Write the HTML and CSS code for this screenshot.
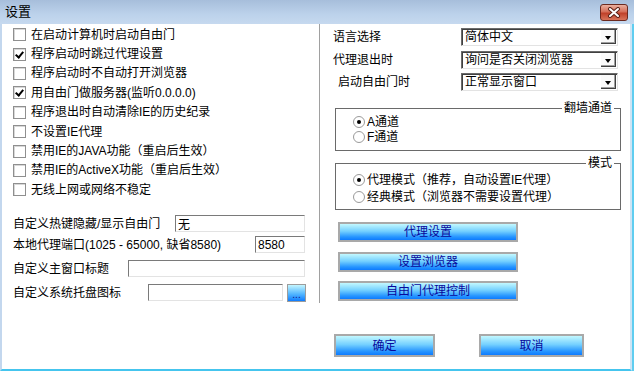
FILE: index.html
```html
<!DOCTYPE html>
<html lang="zh-CN">
<head>
    <meta charset="UTF-8">
    <title>设置</title>
    <link rel="stylesheet" href="styles.css">
</head>
<body>
<div class="window">
    <div class="titlebar">
        <span class="title">设置</span>
        <button class="close">
            <svg width="14" height="11" viewBox="0 0 14 11">
                <path d="M3 2 L11 9 M11 2 L3 9" stroke="#5b2118" stroke-width="4" stroke-linecap="round"/>
                <path d="M3 2 L11 9 M11 2 L3 9" stroke="#fff" stroke-width="2" stroke-linecap="round"/>
            </svg>
        </button>
    </div>

    <div class="body">
        <div class="cols">
            <div class="left">
                <div class="checks">
                    <label class="check"><span class="box"></span>在启动计算机时启动自由门</label>
                    <label class="check"><span class="box on"></span>程序启动时跳过代理设置</label>
                    <label class="check"><span class="box"></span>程序启动时不自动打开浏览器</label>
                    <label class="check"><span class="box on"></span>用自由门做服务器(监听0.0.0.0)</label>
                    <label class="check"><span class="box"></span>程序退出时自动清除IE的历史纪录</label>
                    <label class="check"><span class="box"></span>不设置IE代理</label>
                    <label class="check"><span class="box"></span>禁用IE的JAVA功能（重启后生效）</label>
                    <label class="check"><span class="box"></span>禁用IE的ActiveX功能（重启后生效）</label>
                    <label class="check"><span class="box"></span>无线上网或网络不稳定</label>
                </div>

                <div class="field f1">
                    <span class="flabel w162">自定义热键隐藏/显示自由门</span>
                    <input class="text w130" type="text" value="无">
                </div>
                <div class="field f2">
                    <span class="flabel w242">本地代理端口(1025 - 65000, 缺省8580)</span>
                    <input class="text w50" type="text" value="8580">
                </div>
                <div class="field f3">
                    <span class="flabel w115">自定义主窗口标题</span>
                    <input class="text w177" type="text" value="">
                </div>
                <div class="field f3">
                    <span class="flabel w135">自定义系统托盘图标</span>
                    <input class="text w135" type="text" value="">
                    <button class="browse">...</button>
                </div>
            </div>

            <div class="right">
                <div class="opt">
                    <span class="olabel">语言选择</span>
                    <div class="combo"><span class="cval">简体中文</span><span class="arrow"></span></div>
                </div>
                <div class="opt">
                    <span class="olabel">代理退出时</span>
                    <div class="combo"><span class="cval">询问是否关闭浏览器</span><span class="arrow"></span></div>
                </div>
                <div class="opt">
                    <span class="olabel indent">启动自由门时</span>
                    <div class="combo"><span class="cval">正常显示窗口</span><span class="arrow"></span></div>
                </div>

                <div class="group g1">
                    <span class="gtitle">翻墙通道</span>
                    <label class="radio"><span class="dot on"></span>A通道</label>
                    <label class="radio"><span class="dot"></span>F通道</label>
                </div>
                <div class="group g2">
                    <span class="gtitle">模式</span>
                    <label class="radio"><span class="dot on"></span>代理模式（推荐，自动设置IE代理）</label>
                    <label class="radio"><span class="dot"></span>经典模式（浏览器不需要设置代理）</label>
                </div>

                <div class="btns">
                    <button class="blue wide">代理设置</button>
                    <button class="blue wide">设置浏览器</button>
                    <button class="blue wide">自由门代理控制</button>
                </div>
            </div>
        </div>

        <div class="actions">
            <button class="blue ok">确定</button>
            <button class="blue cancel">取消</button>
        </div>
    </div>
</div>
</body>
</html>
```

FILE: styles.css
```css
* {
    box-sizing: border-box;
}

body {
    margin: 0;
    font-family: "Liberation Sans", "Noto Sans CJK SC", sans-serif;
    font-size: 12px;
    color: #000;
}

.window {
    width: 634px;
    height: 371px;
    background: #fff;
    display: flex;
    flex-direction: column;
}

.titlebar {
    height: 24px;
    flex: none;
    display: flex;
    align-items: center;
    justify-content: space-between;
    padding: 0 6px 0 5px;
    background: linear-gradient(#a7bedb, #bcd2eb 60%, #c6d9ef);
}

.title {
    font-size: 13px;
    line-height: 24px;
}

.close {
    width: 28px;
    height: 17px;
    padding: 0;
    border: 1px solid #6b2a20;
    border-radius: 3px;
    background: linear-gradient(#eab0a0, #d56e58 45%, #c0412a 55%, #d8745a);
    display: flex;
    align-items: center;
    justify-content: center;
}

.body {
    flex: 1;
    width: 632px;
    border-left: 2px solid #c3d7ee;
    border-right: 2px solid #cfe4f4;
    border-bottom: 2px solid #45c5ee;
    box-shadow: 2px 0 0 #5fcdf0;
    display: flex;
    flex-direction: column;
}

.cols {
    display: flex;
    height: 279px;
}

/* left column */

.left {
    width: 318px;
    border-right: 1px solid #a0a0a0;
    padding: 1px 0 0 11px;
}

.check {
    display: flex;
    align-items: center;
    height: 19.4px;
    gap: 5px;
    line-height: 14px;
}

.box {
    width: 13px;
    height: 13px;
    flex: none;
    border: 1px solid #8f8f8f;
    box-shadow: inset 1px 1px 0 #d8d8d8;
    background: #fff;
    position: relative;
}

.box.on::after {
    content: "";
    position: absolute;
    left: 3px;
    top: 1px;
    width: 3px;
    height: 6px;
    border-right: 2px solid #000;
    border-bottom: 2px solid #000;
    transform: rotate(40deg);
}

.field {
    display: flex;
    align-items: center;
    height: 20px;
}

.f1 {
    margin-top: 14px;
}

.f2 {
    margin-top: 1px;
}

.f3 {
    margin-top: 4px;
}

.flabel {
    flex: none;
    white-space: nowrap;
    line-height: 14px;
}

.w162 { width: 162px; }
.w242 { width: 242px; }
.w115 { width: 115px; }
.w135 { width: 135px; }
.w130 { width: 130px; }
.w50 { width: 50px; }
.w177 { width: 177px; }

.text {
    height: 17px;
    padding: 0 2px;
    font: inherit;
    border: 1px solid;
    border-color: #7a7a7a #e3e3e3 #e3e3e3 #7a7a7a;
    outline: none;
    background: #fff;
}

.browse {
    width: 19px;
    height: 18px;
    margin-left: 4px;
    padding: 0;
    border: 1px solid #9c9c9c;
    background: linear-gradient(#c4f6ff, #55b8ff 55%, #0f7cff);
    color: #1a1a80;
    font: 10px "Liberation Sans", sans-serif;
    line-height: 20px;
}

/* right column */

.right {
    flex: 1;
    padding: 2px 0 0 13px;
}

.opt {
    display: flex;
    align-items: center;
    height: 22.5px;
}

.olabel {
    width: 128px;
    line-height: 14px;
}

.olabel.indent {
    padding-left: 5px;
}

.combo {
    width: 157px;
    height: 18px;
    display: flex;
    border: 1px solid;
    border-color: #6b6b6b #e3e3e3 #e3e3e3 #6b6b6b;
    box-shadow: inset 1px 1px 0 #404040;
    background: #fff;
}

.cval {
    flex: 1;
    padding: 1px 0 0 3px;
    line-height: 15px;
}

.arrow {
    width: 15px;
    margin: 1px 1px 1px 0;
    background: #fafafa;
    box-shadow: inset -1px -1px 0 #404040, inset -2px -2px 0 #a0a0a0;
    position: relative;
}

.arrow::after {
    content: "";
    position: absolute;
    left: 4px;
    top: 6px;
    border-left: 3.5px solid transparent;
    border-right: 3.5px solid transparent;
    border-top: 4px solid #000;
}

.group {
    position: relative;
    width: 286px;
    margin-left: 2px;
    border: 1px solid #6a6a6a;
    padding-left: 17px;
}

.g1 {
    margin-top: 14.5px;
    height: 43px;
    padding-top: 5.5px;
}

.g2 {
    margin-top: 12px;
    height: 47px;
    padding-top: 7.5px;
}

.gtitle {
    position: absolute;
    top: -8px;
    right: 6px;
    padding: 0 2px;
    background: #fff;
    line-height: 14px;
}

.radio {
    display: flex;
    align-items: center;
    gap: 2px;
    height: 15px;
    line-height: 14px;
}

.g2 .radio {
    height: 17px;
}

.dot {
    width: 12px;
    height: 12px;
    flex: none;
    border: 1px solid #9a9a9a;
    border-radius: 50%;
    background: #fff;
    position: relative;
}

.dot.on::after {
    content: "";
    position: absolute;
    left: 3px;
    top: 3px;
    width: 4px;
    height: 4px;
    border-radius: 50%;
    background: #000;
}

.btns {
    display: flex;
    flex-direction: column;
    gap: 9.5px;
    margin: 12px 0 0 5px;
}

.blue {
    padding: 0;
    border: 2px solid #a9a9a9;
    background: linear-gradient(#c2f8ff, #74d0ff 45%, #2796ff 80%, #0d7bff);
    color: #08089c;
    font: 12px "Liberation Sans", "Noto Sans CJK SC", sans-serif;
    line-height: 16px;
}

.wide {
    width: 180px;
    height: 20px;
}

/* bottom */

.actions {
    display: flex;
    gap: 44px;
    margin-top: 31px;
    padding-left: 332px;
}

.ok {
    width: 101px;
    height: 23px;
}

.cancel {
    width: 105px;
    height: 23px;
}
```
